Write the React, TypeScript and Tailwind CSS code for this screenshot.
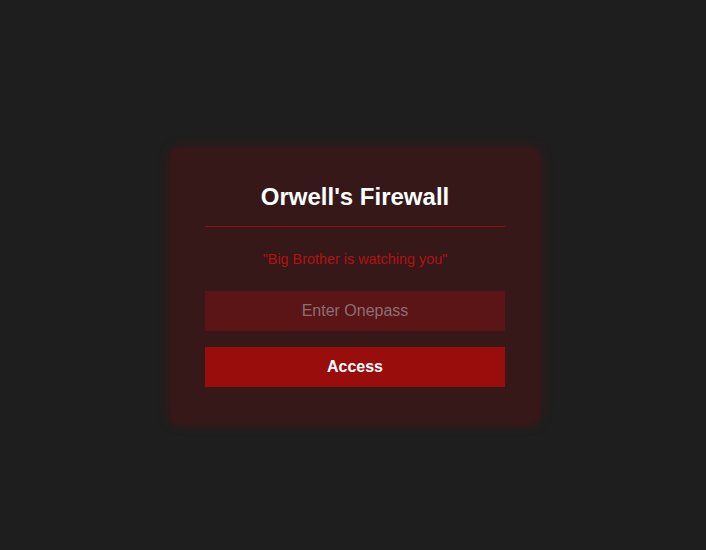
import React from "react";

export default function App() {
  return (
    <div
      className="w-[706px] h-[550px] bg-[#1e1e1e] flex items-start justify-center pl-[4px]"
      style={{ fontFamily: '"Liberation Sans", Arial, sans-serif' }}
    >
      <div className="mt-[148px] w-[370px] h-[276px] bg-[#361819] rounded-[10px] shadow-[0_0_12px_rgba(139,0,0,0.35)] px-[35px] pt-[35px] flex flex-col">
        <h1 className="text-white text-[24px] leading-[28px] font-bold text-center">
          Orwell's Firewall
        </h1>
        <div className="mt-[15px] h-px w-full bg-[#8b1010]" />
        <p className="text-[#b31212] text-[14.4px] leading-[16px] text-center mt-[24px]">
          "Big Brother is watching you"
        </p>
        <input
          className="mt-[24px] h-[40px] w-full bg-[#5c1517] text-center text-[16px] text-white placeholder:text-[#8a7072] outline-none"
          placeholder="Enter Onepass"
        />
        <button className="mt-[16px] h-[40px] w-full bg-[#990d0d] text-white font-bold text-[16px]">
          Access
        </button>
      </div>
    </div>
  );
}
